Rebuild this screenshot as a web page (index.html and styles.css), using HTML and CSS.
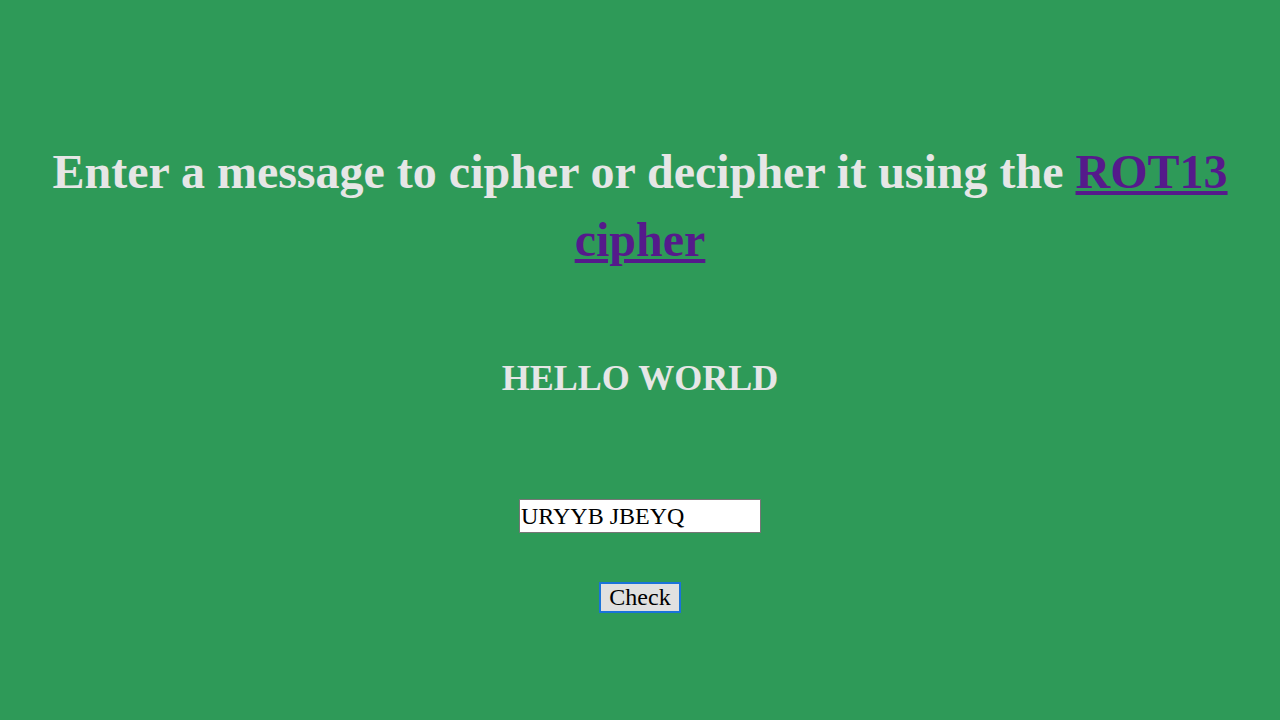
FILE: index.html
```html
<!DOCTYPE html>
<html>
<head>
<meta charset="utf-8">
<link rel="stylesheet" href="styles.css">
</head>
<body>
<main class="page">
  <h1 class="title">Enter a message to cipher or decipher it using the <a class="link" href="#">ROT13 cipher</a></h1>
  <h2 class="result">HELLO WORLD</h2>
  <div class="form">
    <input class="field" type="text" value="URYYB JBEYQ">
    <button class="btn" type="button">Check</button>
  </div>
</main>
</body>
</html>
```
FILE: styles.css
```css
html, body {
  margin: 0;
  padding: 0;
  height: 100%;
}
body {
  background: #2e9a58;
  color: #e6e6e6;
  font-family: "Liberation Serif", "Times New Roman", serif;
  text-align: center;
}
.page {
  padding-top: 138px;
  display: flex;
  flex-direction: column;
  align-items: center;
}
.title {
  margin: 0 40px;
  font-size: 48px;
  line-height: 68px;
  font-weight: bold;
}
.link {
  color: #551a8b;
}
.result {
  margin: 82px 0 0;
  font-size: 36px;
  line-height: 44px;
}
.form {
  margin-top: 99px;
  display: flex;
  flex-direction: column;
  align-items: center;
  gap: 49px;
}
.field {
  width: 242px;
  height: 34px;
  box-sizing: border-box;
  font-family: "Liberation Serif", "Times New Roman", serif;
  font-size: 24px;
  padding: 0 1px;
  border: 1px solid #767676;
  background: #fff;
  color: #000;
}
.btn {
  font-family: "Liberation Serif", "Times New Roman", serif;
  font-size: 24px;
  padding: 0 8px;
  height: 31px;
  border: 2px solid #1a73d9;
  background: #e0e0e0;
  color: #000;
}
```
